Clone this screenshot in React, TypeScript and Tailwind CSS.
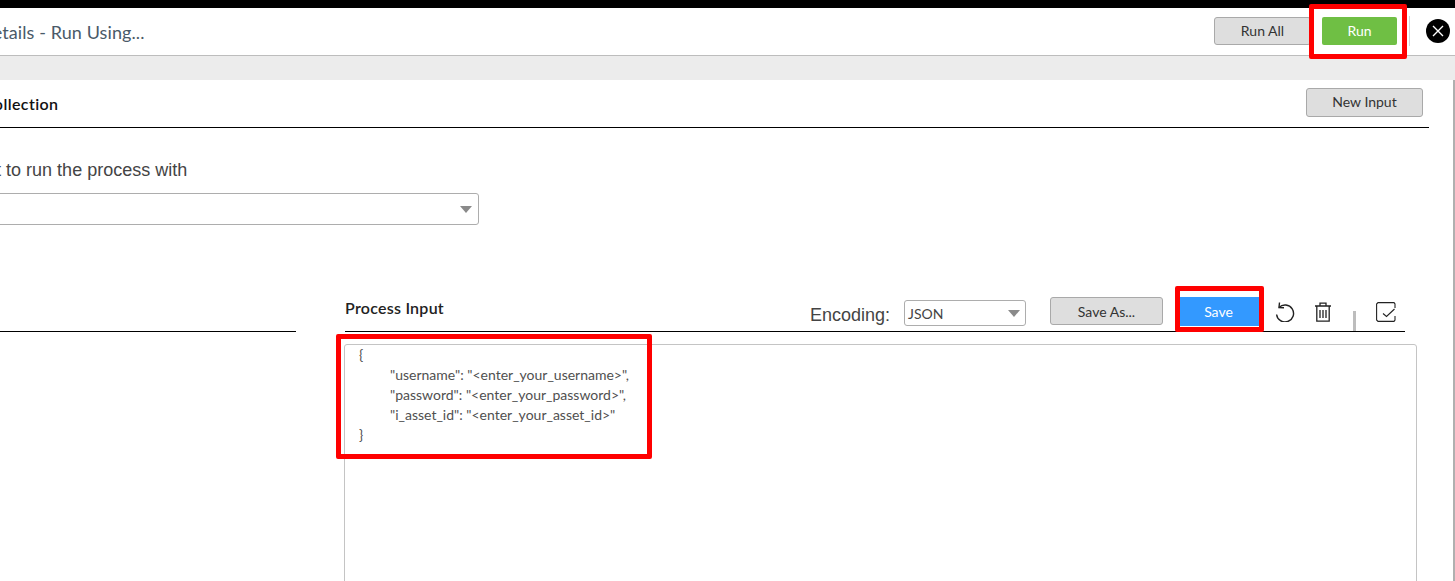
import React from "react";

const futura = "font-['Lato','Noto_Sans',sans-serif]";

function RedBox({ className }: { className: string }) {
  return <div className={`absolute border-[5px] border-[#ff0000] rounded-[2px] pointer-events-none ${className}`} />;
}

function Btn({ children, className }: { children: React.ReactNode; className: string }) {
  return (
    <div className={`flex items-center justify-center rounded-[3px] border border-[#a9a9a9] bg-[#dedede] text-[14px] text-[#333] ${className}`}>
      {children}
    </div>
  );
}

function Arrow() {
  return <div className="h-0 w-0 border-x-[6px] border-t-[7px] border-x-transparent border-t-[#8a8a8a]" />;
}

export default function App() {
  return (
    <div className={`relative h-[581px] w-[1455px] overflow-hidden bg-white ${futura}`}>
      <div className="h-2 bg-black" />

      {/* header */}
      <div className="flex h-[48px] items-center border-b border-[#bdbdbd] pb-[2px]">
        <div className="ml-[-21px] mt-[3px] text-[18px] tracking-[0.1px] text-[#4a5a68]">Details - Run Using...</div>
        <div className="ml-auto flex items-center">
          <Btn className="h-[28px] w-[97px]">Run All</Btn>
          <div className="ml-[11px] flex h-[28px] w-[75px] items-center justify-center rounded-[2px] bg-[#6fbf44] text-[14px] text-white">Run</div>
          <div className="ml-[12px] h-[30px] w-px bg-[#d5d5d5]" />
          <div className="ml-[16px] mr-[5px] flex h-[24px] w-[24px] items-center justify-center rounded-full bg-black">
            <svg width="14" height="14" viewBox="0 0 14 14" fill="none" stroke="white" strokeWidth="1.4">
              <path d="M2 2 12 12M12 2 2 12" />
            </svg>
          </div>
        </div>
      </div>

      {/* band */}
      <div className="h-6 bg-[#ececec]" />

      <div className="h-[501px] border-r-2 border-[#b0b0b0]">
        {/* collection */}
        <div className="mr-[24px] flex h-[48px] items-start border-b border-black pt-[8px]">
          <div className="ml-[-17px] mt-[4px] text-[16px] font-semibold tracking-[0.4px] text-[#111]">Collection</div>
          <Btn className="ml-auto mr-[6px] h-[29px] w-[117px] pb-[3px]">New Input</Btn>
        </div>

        {/* select */}
        <div className="ml-[-118px] mt-[32px] h-[20px] font-['Liberation_Sans',sans-serif] text-[18px] leading-[20px] text-[#444]">
          Select an input to run the process with
        </div>
        <div className="ml-[-20px] mt-[13px] flex h-[32px] w-[499px] items-center justify-end rounded-[3px] border border-[#adadad] pr-[6px]">
          <Arrow />
        </div>

        {/* process input */}
        <div className="mt-[62px] flex h-[45px] items-end">
          <div className="h-px w-[296px] bg-black" />
          <div className="relative ml-[49px] flex h-[45px] w-[1060px] border-b border-black">
            <div className="mt-[11px] w-[99px] whitespace-nowrap text-[16px] font-semibold leading-[20px] tracking-[0.25px] text-[#222]">Process Input</div>
            <div className="ml-[366px] mt-[18px] w-[80px] font-['Liberation_Sans',sans-serif] text-[18px] leading-[20px] text-[#444]">Encoding:</div>
            <div className="ml-[14px] mt-[13px] flex h-[26px] w-[122px] items-center justify-between rounded-[3px] border border-[#adadad] pl-[3px] pr-[5px] text-[14px] text-[#444]">
              JSON
              <Arrow />
            </div>
            <Btn className="ml-[24px] mt-[10px] h-[28px] w-[113px]">Save As...</Btn>
            <div className="ml-[17px] mt-[10px] flex h-[29px] w-[79px] items-center justify-center bg-[#3399ff] pr-[2px] text-[14px] text-white">Save</div>
            <svg className="ml-[16px] mt-[15px]" width="20" height="20" viewBox="0 0 20 20" fill="none" stroke="#222" strokeWidth="1.4">
              <path d="M4 5.5A8.5 8.5 0 1 1 1.6 12.5" />
              <path d="M4.5 .5 4 5.5 9 5.8" />
            </svg>
            <svg className="ml-[19px] mt-[15px]" width="18" height="20" viewBox="0 0 18 20" fill="none" stroke="#222" strokeWidth="1.3">
              <path d="M1 4h16M6 4V1.2h6V4M2.8 4.5V19.2h12.4V4.5M6 8v8M9 8v8M12 8v8" />
            </svg>
            <div className="ml-[21px] mt-[24px] h-[20px] w-[3px] bg-[#bdbdbd]" />
            <svg className="ml-[20px] mt-[15px]" width="20" height="20" viewBox="0 0 20 20" fill="none" stroke="#222" strokeWidth="1.1">
              <path d="M19 6V2L18 .6H2L.6 2V18L2 19.4H18L19 18V14" />
              <path d="M7 11.5 10.5 14.5 18.5 7" />
            </svg>
          </div>
        </div>

        {/* editor */}
        <div className="ml-[344px] mt-[12px] h-[260px] w-[1073px] rounded-[3px] border border-[#c4c4c4] pl-[14px] text-[14px] leading-[20px] text-[#505050]">
          <div>{"{"}</div>
          <div className="pl-[31px]">"username": "&lt;enter_your_username&gt;",</div>
          <div className="pl-[31px]">"password": "&lt;enter_your_password&gt;",</div>
          <div className="pl-[31px]">"i_asset_id": "&lt;enter_your_asset_id&gt;"</div>
          <div>{"}"}</div>
        </div>
      </div>

      <RedBox className="left-[1309px] top-[4px] h-[55px] w-[98px]" />
      <RedBox className="left-[1175px] top-[286px] h-[46px] w-[89px]" />
      <RedBox className="left-[336px] top-[334px] h-[125px] w-[316px]" />
    </div>
  );
}
